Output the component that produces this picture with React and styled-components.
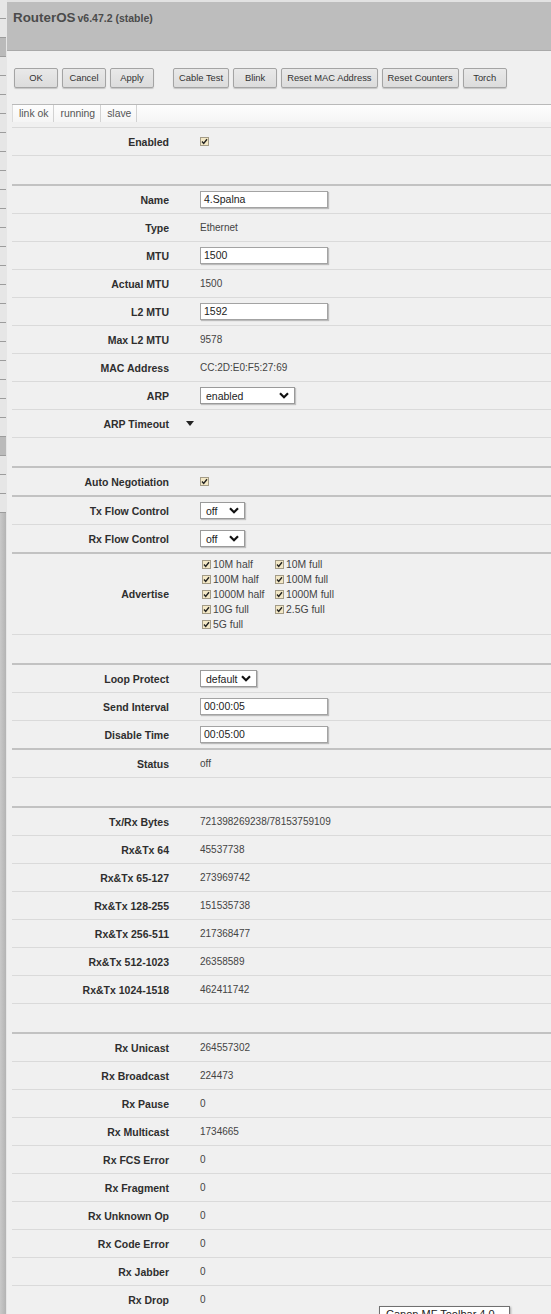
import React from "react";
import styled, { createGlobalStyle } from "styled-components";

const Global = createGlobalStyle`
  html, body { margin: 0; padding: 0; }
  body {
    background: #f0f0f0;
    font-family: "Liberation Sans", Arial, sans-serif;
    color: #333;
    overflow: hidden;
  }
`;

const Page = styled.div`
  display: flex;
  min-height: 1314px;
  position: relative;
`;

const Sidebar = styled.div`
  width: 6px;
  flex: none;
  display: flex;
  flex-direction: column;
  background: linear-gradient(to right, #c9c9c9, #b3b3b3);
  border-right: 1px solid #e6e6e6;
`;

const SideItem = styled.div`
  height: 18px;
  flex: none;
  border-bottom: 1px solid #9c9c9c;
  background: ${(p) => (p.$dark ? "#bababa" : "#e6e6e6")};
`;

const Main = styled.div`
  flex: 1;
  min-width: 0;
  background: #f0f0f0;
`;

const Header = styled.div`
  height: 42px;
  padding: 6px 0 0 6px;
  background: #bdbdbd;
  border-top: 2px solid #e2e2e2;
  border-bottom: 1px solid #a9a9a9;
  color: #4b4b4b;
  font-weight: bold;
  white-space: nowrap;
`;

const Title = styled.span`
  font-size: 13.4px;
`;

const Version = styled.span`
  font-size: 10.5px;
  margin-left: 2px;
`;

const Toolbar = styled.div`
  height: 53px;
  display: flex;
  align-items: center;
  gap: 4px;
  padding: 0 0 0 7px;
`;

const Button = styled.button`
  height: 20px;
  min-width: 44px;
  padding: 0 5px;
  margin-left: ${(p) => (p.$spaced ? "15px" : "0")};
  font-family: "Liberation Sans", Arial, sans-serif;
  font-size: 9.4px;
  color: #333;
  background: linear-gradient(#e9e9e9, #dcdcdc);
  border: 1px solid #a4a4a4;
  border-radius: 2px;
  box-shadow: 0 1px 1px rgba(0, 0, 0, 0.18);
  white-space: nowrap;
`;

const StatusBar = styled.div`
  margin-left: 5px;
  height: 17px;
  display: flex;
  background: linear-gradient(#fdfdfd, #f5f5f5);
  border-top: 1px solid #b9b9b9;
`;

const StatusCell = styled.div`
  padding: 0 5px 0 6px;
  line-height: 17px;
  font-size: 10.4px;
  color: #555;
  border-left: ${(p) => (p.$first ? "1px solid #dcdcdc" : "none")};
  border-right: 1px solid #d2d2d2;
`;

const Form = styled.div`
  margin: 5px 0 0 5px;
  border-top: 1px solid #d9d9d9;
`;

const Group = styled.div`
  border-top: ${(p) => (p.$first ? "none" : "2px solid #c2c2c2")};
  & > * + * {
    border-top: 1px solid #dadada;
  }
`;

const Row = styled.div`
  display: grid;
  grid-template-columns: 157px 31px 1fr;
  align-items: center;
  height: ${(p) => p.$h || 27}px;
`;

const Spacer = styled.div`
  height: 28px;
`;

const Label = styled.div`
  text-align: right;
  font-size: 10.5px;
  font-weight: bold;
  color: #2e2e2e;
  white-space: nowrap;
`;

const Toggle = styled.div`
  display: flex;
  align-items: center;
  padding-left: 17px;
`;

const Value = styled.div`
  font-size: 10px;
  color: #444;
  white-space: nowrap;
  display: flex;
  align-items: center;
`;

const Input = styled.div`
  box-sizing: border-box;
  width: 128px;
  height: 17px;
  padding: 0 3px;
  background: #fff;
  border: 1px solid #a3a3a3;
  box-shadow: 1px 1px 1px rgba(0, 0, 0, 0.22);
  font-size: 10.5px;
  line-height: 15px;
  color: #222;
`;

const Select = styled.div`
  box-sizing: border-box;
  width: ${(p) => p.$w}px;
  height: 17px;
  padding: 0 5px 0 5px;
  background: #fff;
  border: 1px solid #9a9a9a;
  box-shadow: 1px 1px 1px rgba(0, 0, 0, 0.2);
  font-size: 10.5px;
  color: #222;
  display: flex;
  align-items: center;
  justify-content: space-between;
`;

const Box = styled.span`
  box-sizing: border-box;
  width: 9px;
  height: 9px;
  flex: none;
  display: inline-flex;
  align-items: center;
  justify-content: center;
  border: 1px solid #a39b86;
  background: #f3e8c6;
  margin-left: ${(p) => (p.$inset ? "2px" : "0")};
`;

const CheckGrid = styled.div`
  display: grid;
  grid-template-columns: 73px auto;
  grid-auto-rows: 15px;
`;

const CheckItem = styled.div`
  display: flex;
  align-items: center;
  gap: 2px;
  font-size: 10.4px;
  color: #444;
  white-space: nowrap;
`;

const Tooltip = styled.div`
  position: absolute;
  left: 379px;
  top: 1306px;
  width: 131px;
  box-sizing: border-box;
  padding: 1px 6px;
  background: #fff;
  border: 1px solid #707070;
  font-size: 11px;
  color: #222;
  box-shadow: 1px 1px 2px rgba(0, 0, 0, 0.3);
  white-space: nowrap;
`;

function Check({ inset }) {
  return (
    <Box $inset={inset}>
      <svg width="7" height="7" viewBox="0 0 7 7">
        <path d="M1 3.6 L2.7 5.4 L6 1.2" fill="none" stroke="#222" strokeWidth="1.4" />
      </svg>
    </Box>
  );
}

function Chevron() {
  return (
    <svg width="10" height="7" viewBox="0 0 10 7">
      <path d="M1 1.3 L5 5.3 L9 1.3" fill="none" stroke="#111" strokeWidth="2.2" />
    </svg>
  );
}

function Triangle() {
  return (
    <svg width="8" height="5" viewBox="0 0 8 5">
      <polygon points="0,0 8,0 4,5" fill="#222" />
    </svg>
  );
}

function F({ label, toggle, children, h }) {
  return (
    <Row $h={h}>
      <Label>{label}</Label>
      <Toggle>{toggle}</Toggle>
      <Value>{children}</Value>
    </Row>
  );
}

const sideItems = [
  0, 0, 1, 0, 0, 0, 0, 0, 0, 0, 0, 0, 0, 0, 0, 0, 0, 0, 0, 0, 0, 0, 0, 1, 0, 0, 0,
];

const advertise = [
  "10M half",
  "10M full",
  "100M half",
  "100M full",
  "1000M half",
  "1000M full",
  "10G full",
  "2.5G full",
  "5G full",
];

const stats1 = [
  ["Tx/Rx Bytes", "721398269238/78153759109"],
  ["Rx&Tx 64", "45537738"],
  ["Rx&Tx 65-127", "273969742"],
  ["Rx&Tx 128-255", "151535738"],
  ["Rx&Tx 256-511", "217368477"],
  ["Rx&Tx 512-1023", "26358589"],
  ["Rx&Tx 1024-1518", "462411742"],
];

const stats2 = [
  ["Rx Unicast", "264557302"],
  ["Rx Broadcast", "224473"],
  ["Rx Pause", "0"],
  ["Rx Multicast", "1734665"],
  ["Rx FCS Error", "0"],
  ["Rx Fragment", "0"],
  ["Rx Unknown Op", "0"],
  ["Rx Code Error", "0"],
  ["Rx Jabber", "0"],
  ["Rx Drop", "0"],
];

export default function App() {
  return (
    <Page>
      <Global />
      <Sidebar>
        {sideItems.map((d, i) => (
          <SideItem key={i} $dark={d === 1} />
        ))}
      </Sidebar>
      <Main>
        <Header>
          <Title>RouterOS</Title>
          <Version>v6.47.2 (stable)</Version>
        </Header>
        <Toolbar>
          <Button>OK</Button>
          <Button>Cancel</Button>
          <Button>Apply</Button>
          <Button $spaced>Cable Test</Button>
          <Button>Blink</Button>
          <Button>Reset MAC Address</Button>
          <Button>Reset Counters</Button>
          <Button>Torch</Button>
        </Toolbar>
        <StatusBar>
          <StatusCell $first>link ok</StatusCell>
          <StatusCell>running</StatusCell>
          <StatusCell>slave</StatusCell>
        </StatusBar>
        <Form>
          <Group $first>
            <F label="Enabled">
              <Check />
            </F>
            <Spacer />
          </Group>
          <Group>
            <F label="Name">
              <Input>4.Spalna</Input>
            </F>
            <F label="Type">Ethernet</F>
            <F label="MTU">
              <Input>1500</Input>
            </F>
            <F label="Actual MTU">1500</F>
            <F label="L2 MTU">
              <Input>1592</Input>
            </F>
            <F label="Max L2 MTU">9578</F>
            <F label="MAC Address">CC:2D:E0:F5:27:69</F>
            <F label="ARP">
              <Select $w={95}>
                enabled
                <Chevron />
              </Select>
            </F>
            <F label="ARP Timeout" toggle={<Triangle />} />
            <Spacer />
          </Group>
          <Group>
            <F label="Auto Negotiation">
              <Check />
            </F>
          </Group>
          <Group>
            <F label="Tx Flow Control">
              <Select $w={45}>
                off
                <Chevron />
              </Select>
            </F>
            <F label="Rx Flow Control">
              <Select $w={45}>
                off
                <Chevron />
              </Select>
            </F>
          </Group>
          <Group>
            <F label="Advertise" h={80}>
              <CheckGrid>
                {advertise.map((a) => (
                  <CheckItem key={a}>
                    <Check inset />
                    {a}
                  </CheckItem>
                ))}
              </CheckGrid>
            </F>
            <Spacer />
          </Group>
          <Group>
            <F label="Loop Protect">
              <Select $w={57}>
                default
                <Chevron />
              </Select>
            </F>
            <F label="Send Interval">
              <Input>00:00:05</Input>
            </F>
            <F label="Disable Time">
              <Input>00:05:00</Input>
            </F>
          </Group>
          <Group>
            <F label="Status">off</F>
            <Spacer />
          </Group>
          <Group>
            {stats1.map(([l, v]) => (
              <F key={l} label={l}>
                {v}
              </F>
            ))}
            <Spacer />
          </Group>
          <Group>
            {stats2.map(([l, v]) => (
              <F key={l} label={l}>
                {v}
              </F>
            ))}
          </Group>
        </Form>
      </Main>
      <Tooltip>Canon MF Toolbar 4.0</Tooltip>
    </Page>
  );
}
